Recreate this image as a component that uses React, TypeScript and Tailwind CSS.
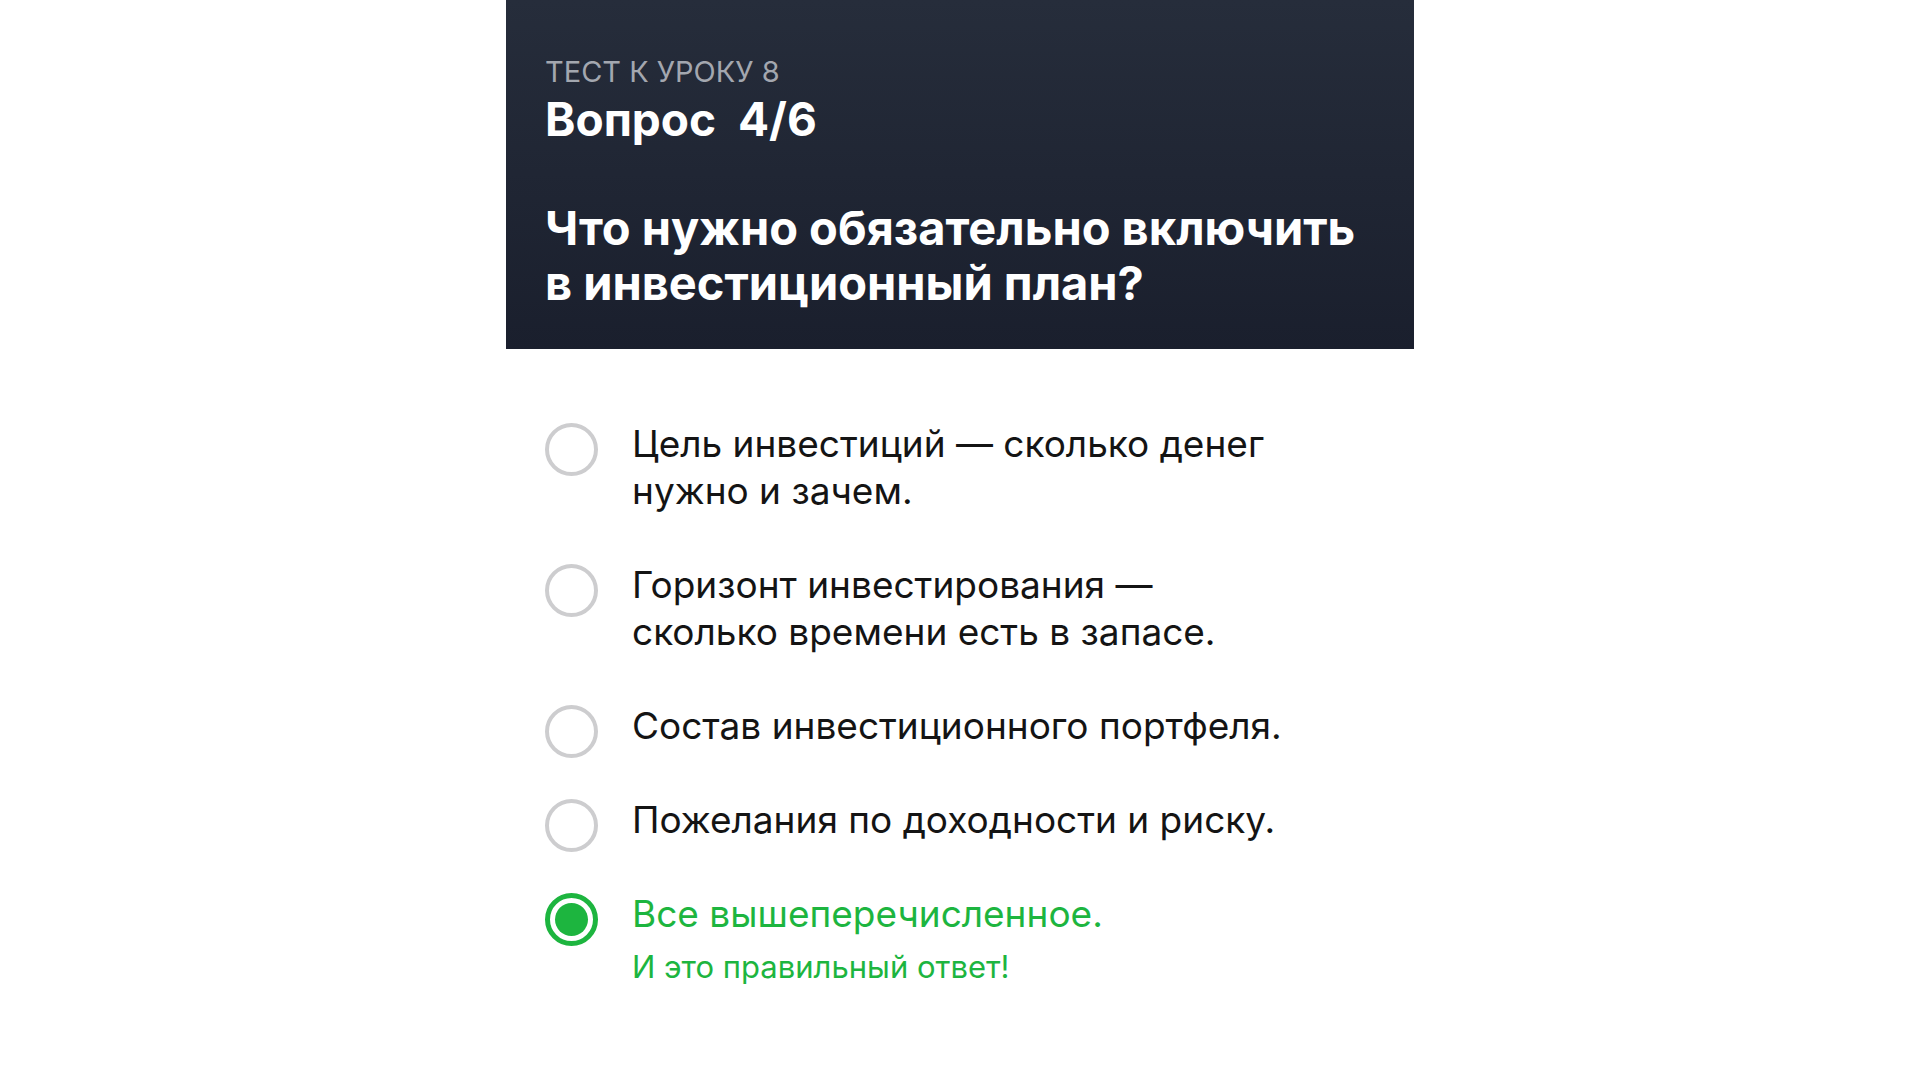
import React from 'react';

const options = [
  { text: 'Цель инвестиций — сколько денег\nнужно и зачем.' },
  { text: 'Горизонт инвестирования —\nсколько времени есть в запасе.' },
  { text: 'Состав инвестиционного портфеля.' },
  { text: 'Пожелания по доходности и риску.' },
  { text: 'Все вышеперечисленное.', correct: true },
];

function Radio({ checked }: { checked?: boolean }) {
  if (checked) {
    return (
      <span className="mt-[3px] -mb-[9px] flex h-[53px] w-[53px] flex-shrink-0 items-center justify-center rounded-full border-[5px] border-[#1db53f]">
        <span className="h-[33px] w-[33px] rounded-full bg-[#1db53f]" />
      </span>
    );
  }
  return <span className="mt-[3px] -mb-[9px] h-[53px] w-[53px] flex-shrink-0 rounded-full border-[4px] border-[#cdcdcf]" />;
}

export default function App() {
  return (
    <div className="min-h-screen bg-white flex justify-center font-['Inter','Noto_Sans',sans-serif]">
      <div className="w-[908px]">
        {/* Header */}
        <header className="h-[349px] bg-gradient-to-b from-[#262d3b] to-[#1a1f2d] pl-[39px] pt-[55px]">
          <p className="text-[29px] leading-[34px] text-[#a3a7af] uppercase">Тест к уроку 8</p>
          <h1 className="mt-[2px] text-[46px] leading-[56px] font-bold text-white">Вопрос&nbsp; 4/6</h1>
          <h2 className="mt-[53px] text-[47px] leading-[55px] font-bold text-white">
            Что нужно обязательно включить
            <br />
            в инвестиционный план?
          </h2>
        </header>

        {/* Options */}
        <ul className="flex flex-col gap-[47px] pl-[39px] pt-[71px]">
          {options.map((o, i) => (
            <li key={i} className="flex items-start gap-[34px]">
              <Radio checked={o.correct} />
              <div>
                <p
                  className={
                    o.correct
                      ? 'text-[37px] leading-[47px] text-[#1db53f] whitespace-pre-line'
                      : 'text-[37px] leading-[47px] text-[#141414] whitespace-pre-line'
                  }
                >
                  {o.text}
                </p>
                {o.correct && (
                  <p className="mt-[12px] text-[31px] leading-[36px] text-[#1db53f]">И это правильный ответ!</p>
                )}
              </div>
            </li>
          ))}
        </ul>
      </div>
    </div>
  );
}
